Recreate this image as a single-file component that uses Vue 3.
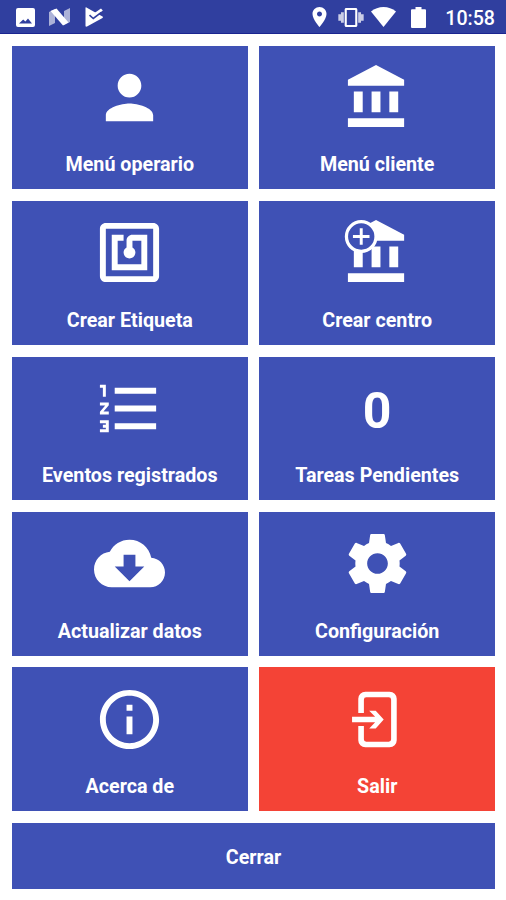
<template>
  <div class="screen">
    <header class="status-bar">
      <div class="status-left">
        <svg class="ic-image" viewBox="0 0 19 19">
          <path fill-rule="evenodd" fill="#fff" d="M2 0h15a2 2 0 0 1 2 2v15a2 2 0 0 1-2 2H2a2 2 0 0 1-2-2V2a2 2 0 0 1 2-2zM3 15.5h13l-4-5-2.6 3-2.2-2z" />
        </svg>
        <svg class="ic-n" viewBox="0 0 21 18">
          <path fill="#fff" opacity=".6" d="M0 4l6-3v14l-6 3zM15 3l6-3v14l-6 3z" />
          <path fill="#fff" d="M1.5 3L7.5.5 19.5 14.5 14 17.5z" />
        </svg>
        <svg class="ic-play" viewBox="0 0 18 20">
          <path fill="#fff" d="M1 .3L17.5 9.6c.6.4.6.9 0 1.3L2 19.6c-.9.4-1.5 0-1.5-.9V1C.5.5.7.2 1 .3z" />
          <path fill="#fff" d="M8 7l8-5.5 1.8 2L11 9z" />
          <path fill="none" stroke="#303f9f" stroke-width="1.6" d="M4.5 8.2l3.8 3.3 8-6.2" />
        </svg>
      </div>
      <div class="status-right">
        <svg class="ic-pin" viewBox="5 2 14 20">
          <path fill="#fff" d="M12 2C8.13 2 5 5.13 5 9c0 5.25 7 13 7 13s7-7.75 7-13c0-3.87-3.13-7-7-7zm0 9.5c-1.38 0-2.5-1.12-2.5-2.5s1.12-2.5 2.5-2.5 2.5 1.12 2.5 2.5-1.12 2.5-2.5 2.5z" />
        </svg>
        <svg class="ic-vibrate" viewBox="0 3 24 18">
          <path fill="#fff" opacity=".75" d="M0 15h2.5V9H0v6zm2.5 2h2.7V7H2.5v10zm19-8v6H24V9h-2.5zm-2.7 8h2.7V7h-2.7v10z" />
          <path fill="#fff" d="M16.5 3h-9C6.67 3 6 3.67 6 4.5v15c0 .83.67 1.5 1.5 1.5h9c.83 0 1.5-.67 1.5-1.5v-15c0-.83-.67-1.5-1.5-1.5zM16 19H8V5h8v14z" />
        </svg>
        <svg class="ic-wifi" viewBox="0 0 25 20">
          <path fill="#fff" d="M0 4.5C3.5 1.6 8 0 12.5 0S21.5 1.6 25 4.5L12.5 20z" />
        </svg>
        <svg class="ic-battery" viewBox="0 0 15 21">
          <path fill="#fff" d="M4.5 0h6v2.2H14a1 1 0 0 1 1 1V20a1 1 0 0 1-1 1H1a1 1 0 0 1-1-1V3.2a1 1 0 0 1 1-1h3.5z" />
        </svg>
        <span class="clock">10:58</span>
      </div>
    </header>

    <main class="menu">
      <button
        v-for="item in items"
        :key="item.label"
        type="button"
        class="tile"
        :class="{ danger: item.danger }"
      >
        <span v-if="item.count !== undefined" class="count">{{ item.count }}</span>
        <svg v-else class="tile-icon" viewBox="0 0 24 24">
          <path :d="icons[item.icon]" fill="currentColor" />
          <g v-if="item.badge">
            <circle class="badge-ring" cx="6.5" cy="6.6" r="5" />
            <path class="badge-plus" d="M6.5 3.8v5.6M3.7 6.6h5.6" />
          </g>
        </svg>
        <span class="tile-label">{{ item.label }}</span>
      </button>
      <button type="button" class="close-btn">Cerrar</button>
    </main>
  </div>
</template>

<script setup>
const icons = {
  person: "M12 12c2.21 0 4-1.79 4-4s-1.79-4-4-4-4 1.79-4 4 1.79 4 4 4zm0 2c-2.67 0-8 1.34-8 4v2h16v-2c0-2.66-5.33-4-8-4z",
  bank: "M4 10v7h3v-7H4zm6 0v7h3v-7h-3zM2 22h19v-3H2v3zm14-12v7h3v-7h-3zm-4.5-9L2 6v2h19V6l-9.5-5z",
  nfc: "M20 2H4c-1.1 0-2 .9-2 2v16c0 1.1.9 2 2 2h16c1.1 0 2-.9 2-2V4c0-1.1-.9-2-2-2zm0 18H4V4h16v16zM18 6h-5c-1.1 0-2 .9-2 2v2.28c-.6.35-1 .98-1 1.72 0 1.1.9 2 2 2s2-.9 2-2c0-.74-.4-1.38-1-1.72V8h3v8H8V8h2V6H6v12h12V6z",
  list: "M2 17h2v.5H3v1h1v.5H2v1h3v-4H2v1zm1-9h1V4H2v1h1v3zm-1 3h1.8L2 13.1v.9h3v-1H3.2L5 10.9V10H2v1zm5-6v2h14V5H7zm0 14h14v-2H7v2zm0-6h14v-2H7v2z",
  cloud: "M19.35 10.04C18.67 6.59 15.64 4 12 4 9.11 4 6.6 5.64 5.35 8.04 2.34 8.36 0 10.91 0 14c0 3.31 2.69 6 6 6h13c2.76 0 5-2.24 5-5 0-2.64-2.05-4.78-4.65-4.96zM17 13l-5 5-5-5h3V9h4v4h3z",
  settings: "M19.43 12.98c.04-.32.07-.64.07-.98s-.03-.66-.07-.98l2.11-1.65c.19-.15.24-.42.12-.64l-2-3.46c-.12-.22-.39-.3-.61-.22l-2.49 1c-.52-.4-1.08-.73-1.69-.98l-.38-2.65C14.46 2.18 14.25 2 14 2h-4c-.25 0-.46.18-.49.42l-.38 2.65c-.61.25-1.17.59-1.69.98l-2.49-1c-.23-.09-.49 0-.61.22l-2 3.46c-.13.22-.07.49.12.64l2.11 1.65c-.04.32-.07.65-.07.98s.03.66.07.98l-2.11 1.65c-.19.15-.24.42-.12.64l2 3.46c.12.22.39.3.61.22l2.49-1c.52.4 1.08.73 1.69.98l.38 2.65c.03.24.24.42.49.42h4c.25 0 .46-.18.49-.42l.38-2.65c.61-.25 1.17-.59 1.69-.98l2.49 1c.23.09.49 0 .61-.22l2-3.46c.12-.22.07-.49-.12-.64l-2.11-1.65zM12 15.5c-1.93 0-3.5-1.57-3.5-3.5s1.57-3.5 3.5-3.5 3.5 1.57 3.5 3.5-1.57 3.5-3.5 3.5z",
  info: "M11 17h2v-6h-2v6zm1-15C6.48 2 2 6.48 2 12s4.48 10 10 10 10-4.48 10-10S17.52 2 12 2zm0 18c-4.41 0-8-3.59-8-8s3.59-8 8-8 8 3.59 8 8-3.59 8-8 8zM11 9h2V7h-2v2z",
  exit: "M5.5 9.8V5A2.4 2.4 0 0 1 7.9 2.6h8.2A2.4 2.4 0 0 1 18.5 5v14a2.4 2.4 0 0 1-2.4 2.4H7.9A2.4 2.4 0 0 1 5.5 19v-4.8h1.9v4.5a.8.8 0 0 0 .8.8h7.6a.8.8 0 0 0 .8-.8V5.3a.8.8 0 0 0-.8-.8H8.2a.8.8 0 0 0-.8.8v4.5zM3.4 11.1h7.8l-2-2.1h2.2l2.7 3-2.7 3H9.2l2-2.1H3.4z",
};

const items = [
  { label: "Menú operario", icon: "person" },
  { label: "Menú cliente", icon: "bank" },
  { label: "Crear Etiqueta", icon: "nfc" },
  { label: "Crear centro", icon: "bank", badge: true },
  { label: "Eventos registrados", icon: "list" },
  { label: "Tareas Pendientes", count: 0 },
  { label: "Actualizar datos", icon: "cloud" },
  { label: "Configuración", icon: "settings" },
  { label: "Acerca de", icon: "info" },
  { label: "Salir", icon: "exit", danger: true },
];
</script>

<style>
body {
  margin: 0;
  background: #fff;
}
</style>

<style scoped>
.screen {
  width: 100%;
  height: 900px;
  box-sizing: border-box;
  background: #fff;
  font-family: Roboto, sans-serif;
  overflow: hidden;
}

.status-bar {
  height: 34px;
  box-sizing: border-box;
  padding: 1px 11px 0 16px;
  display: flex;
  align-items: center;
  justify-content: space-between;
  background: #303f9f;
  border-bottom: 1px solid #1b2590;
}

.status-left,
.status-right {
  display: flex;
  align-items: center;
}

.status-left svg,
.status-right svg {
  display: block;
  flex: none;
}

.ic-image {
  width: 19px;
  height: 19px;
  margin-right: 14px;
}

.ic-n {
  width: 21px;
  height: 18px;
  margin-right: 15px;
}

.ic-play {
  width: 18px;
  height: 20px;
}

.ic-pin {
  width: 15px;
  height: 20px;
  margin-right: 11px;
}

.ic-vibrate {
  width: 26px;
  height: 19px;
  margin-right: 7px;
}

.ic-wifi {
  width: 25px;
  height: 20px;
  margin-right: 15px;
}

.ic-battery {
  width: 15px;
  height: 21px;
  margin-right: 19px;
}

.clock {
  color: #fff;
  font-size: 19.6px;
  font-weight: 500;
  line-height: 28px;
  padding-top: 4px;
}

.menu {
  display: grid;
  grid-template-columns: 1fr 1fr;
  grid-template-rows: repeat(5, 143.6px) 66px;
  gap: 11.8px;
  padding: 11.8px 11px 0 12px;
}

.tile,
.close-btn {
  border: none;
  border-radius: 0;
  margin: 0;
  background: #3f51b5;
  color: #fff;
  font-family: inherit;
  font-size: 19.7px;
  font-weight: 700;
  cursor: pointer;
}

.tile {
  display: flex;
  flex-direction: column;
  align-items: center;
  justify-content: flex-start;
  padding: 16.2px 0 0;
}

.tile.danger {
  background: #f44336;
}

.tile-icon {
  display: block;
  width: 71px;
  height: 71px;
}

.count {
  height: 71px;
  line-height: 77px;
  font-size: 50px;
}

.tile-label {
  margin-top: 20.5px;
  line-height: 24px;
  white-space: nowrap;
}

.badge-ring {
  fill: #3f51b5;
  stroke: #fff;
  stroke-width: 1.1;
}

.badge-plus {
  fill: none;
  stroke: #fff;
  stroke-width: 1;
}

.close-btn {
  grid-column: 1 / -1;
  padding: 3px 0 0;
}
</style>
